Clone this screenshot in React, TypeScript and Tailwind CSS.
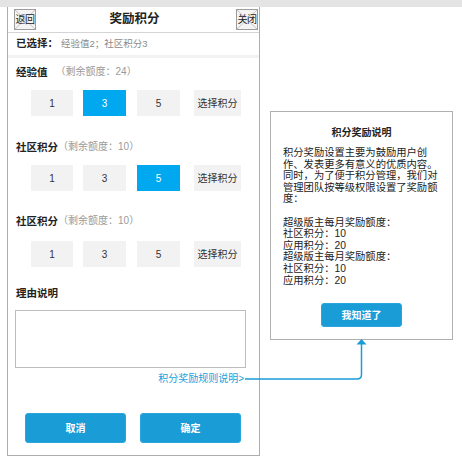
import { ReactNode } from 'react';

const blue = 'bg-[#1a9dd7]';

function PlaceholderButton({ label }: { label: string }) {
  return (
    <div className="relative flex h-[21px] w-[22px] items-center justify-center overflow-hidden border border-[#9c9c9c] bg-[#f4f4f4]">
      <svg className="absolute inset-0 h-full w-full" viewBox="0 0 20 19" preserveAspectRatio="none">
        <line x1="0" y1="0" x2="20" y2="19" stroke="#c4c4c4" strokeWidth="1" />
        <line x1="20" y1="0" x2="0" y2="19" stroke="#c4c4c4" strokeWidth="1" />
      </svg>
      <span className="relative whitespace-nowrap text-[10px] leading-none tracking-[-0.5px] text-[#222]">{label}</span>
    </div>
  );
}

function SectionLabel({ title, quota, gap }: { title: string; quota: string; gap?: boolean }) {
  return (
    <div className="flex h-[16px] items-center pl-[8px] leading-[16px]">
      <span className="text-[10.5px] font-bold text-[#222]">{title}</span>
      <span className={`text-[10px] text-[#9a9a9a] ${gap ? 'ml-[8px]' : ''}`}>（剩余额度：{quota}）</span>
    </div>
  );
}

function ScoreRow({ active }: { active: number }) {
  const cell = (v: number, cls: string) => (
    <div
      key={v}
      className={`flex h-[26px] items-center justify-center text-[10px] ${cls} ${
        v === active ? 'bg-[#00a8f0] text-white' : 'bg-[#f2f2f2] text-[#333]'
      }`}
    >
      {v}
    </div>
  );
  return (
    <div className="flex pl-[23px]">
      {cell(1, 'w-[42px]')}
      {cell(3, 'ml-[10px] w-[43px]')}
      {cell(5, 'ml-[11px] w-[43px]')}
      <div className="ml-[14px] flex h-[26px] w-[47px] items-center justify-center bg-[#f2f2f2] text-[10px] text-[#333]">
        选择积分
      </div>
    </div>
  );
}

function BlueButton({ children, className }: { children: ReactNode; className?: string }) {
  return (
    <div
      className={`flex items-center justify-center rounded-[3px] border border-[#2aa6dc] ${blue} text-[10px] font-bold text-white ${className ?? ''}`}
    >
      {children}
    </div>
  );
}

export default function App() {
  return (
    <div className="relative h-[461px] w-[462px] overflow-hidden bg-white font-['Liberation_Sans','Noto_Sans_CJK_SC',sans-serif]">
      <div className="h-[7px] bg-[#e4e4e4]" />

      {/* phone frame */}
      <div className="ml-[7px] flex h-[449px] w-[253px] flex-col border-x border-b border-[#adadad]">
        <div className="flex h-[26px] items-center border-b border-[#d4d4d4] pl-[6px] pr-[1px]">
          <PlaceholderButton label="返回" />
          <div className="flex-1 pr-[3px] text-center text-[12.5px] font-bold text-[#222]">奖励积分</div>
          <PlaceholderButton label="关闭" />
        </div>

        <div className="flex h-[22px] items-center pl-[8px]">
          <span className="text-[10.5px] font-bold text-[#222]">已选择：</span>
          <span className="ml-[3px] text-[9.5px] text-[#8a8a8a]">经验值2；社区积分3</span>
        </div>
        <div className="h-[3px] bg-[#f2f2f2]" />

        <div className="mt-[6px]">
          <SectionLabel title="经验值" quota="24" gap />
        </div>
        <div className="mt-[10px]">
          <ScoreRow active={3} />
        </div>

        <div className="mt-[23px]">
          <SectionLabel title="社区积分" quota="10" />
        </div>
        <div className="mt-[10px]">
          <ScoreRow active={5} />
        </div>

        <div className="mt-[22px]">
          <SectionLabel title="社区积分" quota="10" />
        </div>
        <div className="mt-[12px]">
          <ScoreRow active={0} />
        </div>

        <div className="mt-[18px] h-[16px] pl-[8px] text-[10.5px] font-bold leading-[16px] text-[#222]">理由说明</div>
        <div className="ml-[7px] mt-[9px] h-[58px] w-[231px] border border-[#bdbdbd]" />

        <div className="mt-[4px] h-[14px] pr-[15px] text-right text-[10px] leading-[14px] text-[#17a0dc]">
          积分奖励规则说明&gt;
        </div>

        <div className="mt-[27px] flex pl-[17px]">
          <BlueButton className="h-[30px] w-[101px]">取消</BlueButton>
          <BlueButton className="ml-[14px] h-[30px] w-[101px]">确定</BlueButton>
        </div>
      </div>

      {/* rules popup */}
      <div className="absolute left-[270px] top-[111px] flex h-[229px] w-[183px] flex-col border border-[#b0b0b0] bg-white px-[12px]">
        <div className="mt-[14px] h-[14px] text-center text-[10px] font-bold leading-[14px] text-[#222]">积分奖励说明</div>
        <div className="mt-[7px] text-[10.3px] leading-[11.6px] text-[#222]">
          <p>积分奖励设置主要为鼓励用户创作、发表更多有意义的优质内容。同时，为了便于积分管理，我们对管理团队按等级权限设置了奖励额度：</p>
          <p className="h-[11.6px]" />
          <p>超级版主每月奖励额度：</p>
          <p>社区积分：10</p>
          <p>应用积分：20</p>
          <p>超级版主每月奖励额度：</p>
          <p>社区积分：10</p>
          <p>应用积分：20</p>
        </div>
        <BlueButton className="mx-auto mt-[17px] h-[24px] w-[81px]">我知道了</BlueButton>
      </div>

      {/* connector from link to popup */}
      <svg className="pointer-events-none absolute left-0 top-0" width="462" height="461">
        <path d="M245 379 H357 Q361.5 379 361.5 374.5 V344" fill="none" stroke="#1a9dd7" strokeWidth="1.5" />
        <polygon points="356.5,344.5 366.5,344.5 361.5,339" fill="#1a9dd7" />
      </svg>
    </div>
  );
}
